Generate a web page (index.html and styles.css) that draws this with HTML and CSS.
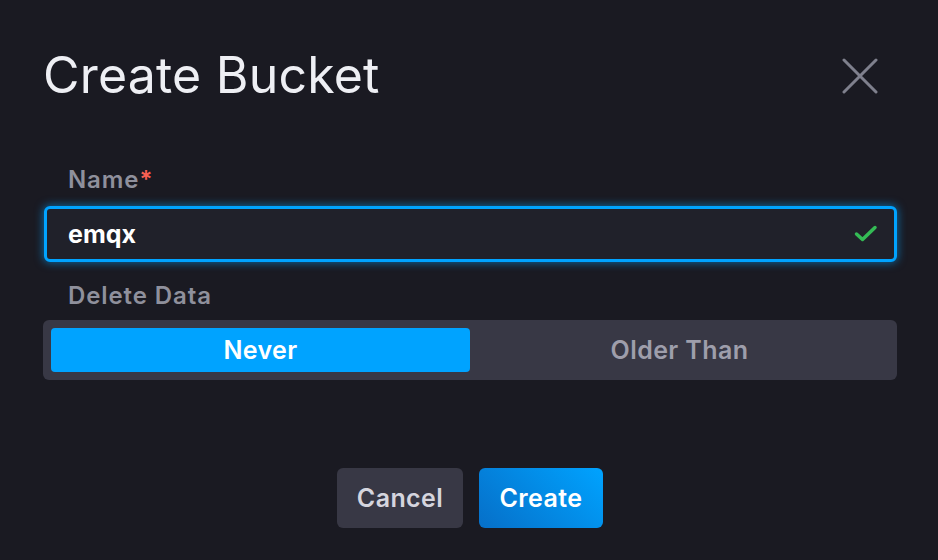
FILE: index.html
```html
<!DOCTYPE html>
<html>
<head>
<meta charset="utf-8">
<link rel="stylesheet" href="styles.css">
</head>
<body>
<div class="dialog">
  <div class="header">
    <h1 class="title">Create Bucket</h1>
    <button class="close" aria-label="Close">
      <svg width="36" height="36" viewBox="0 0 36 36"><path d="M2 2 L34 34 M34 2 L2 34" stroke="#7f808d" stroke-width="3" stroke-linecap="round"/></svg>
    </button>
  </div>
  <div class="body">
    <div class="field">
      <label class="label">Name<span class="req">*</span></label>
      <div class="input">
        <span class="value">emqx</span>
        <svg class="check" width="24" height="20" viewBox="0 0 24 20"><path d="M2.5 10 L8.5 15.5 L21 3.5" fill="none" stroke="#34bb55" stroke-width="3.5" stroke-linecap="round" stroke-linejoin="round"/></svg>
      </div>
    </div>
    <div class="field">
      <label class="label">Delete Data</label>
      <div class="toggle">
        <div class="opt active">Never</div>
        <div class="opt">Older Than</div>
      </div>
    </div>
  </div>
  <div class="footer">
    <button class="btn cancel">Cancel</button>
    <button class="btn create">Create</button>
  </div>
</div>
</body>
</html>
```
FILE: styles.css
```css
* { box-sizing: border-box; }
html, body { margin: 0; padding: 0; }
body {
  background: #1a1a22;
  width: 938px;
  height: 560px;
  font-family: Inter, "Noto Sans", sans-serif;
  color: #e7e8ee;
  overflow: hidden;
}
.dialog {
  padding: 0 41px 0 43px;
}
.header {
  display: flex;
  align-items: center;
  justify-content: space-between;
  height: 152px;
}
.title {
  margin: 0;
  font-weight: 400;
  font-size: 50px;
  color: #eeeff4;
  letter-spacing: 0.2px;
  margin-top: -2px;
}
.close {
  background: none;
  border: 0;
  padding: 0;
  width: 36px;
  height: 36px;
  margin-right: 19px;
  cursor: pointer;
}
.close svg { display: block; }
.body {
  display: flex;
  flex-direction: column;
  margin-top: 13px;
}
.field {
  display: flex;
  flex-direction: column;
}
.field + .field { margin-top: 19px; }
.label {
  font-weight: 600;
  font-size: 24px;
  letter-spacing: 0.9px;
  color: #8f909c;
  padding-left: 25px;
  height: 30px;
  line-height: 30px;
  margin-bottom: 11px;
}
.field + .field .label { margin-bottom: 9px; }
.req { color: #f95f53; }
.input {
  height: 56px;
  border: 3px solid #00a3ff;
  border-radius: 6px;
  background: #20212a;
  box-shadow: 0 0 8px 1px rgba(0, 163, 255, 0.55);
  display: flex;
  align-items: center;
  justify-content: space-between;
  padding: 0 16px 0 21px;
  margin-left: 1px;
}
.value {
  font-weight: 700;
  font-size: 25px;
  color: #ffffff;
}
.check { display: block; }
.toggle {
  background: #383845;
  border-radius: 6px;
  padding: 8px;
  display: flex;
  height: 60px;
}
.opt {
  flex: 1;
  display: flex;
  align-items: center;
  justify-content: center;
  font-weight: 600;
  font-size: 25px;
  letter-spacing: 0.4px;
  color: #9e9eab;
  border-radius: 4px;
}
.opt.active {
  background: #00a3ff;
  color: #ffffff;
}
.footer {
  display: flex;
  justify-content: center;
  gap: 16px;
  margin-top: 88px;
}
.btn {
  font-family: Inter, "Noto Sans", sans-serif;
  height: 60px;
  border: 0;
  border-radius: 6px;
  font-weight: 600;
  font-size: 25px;
  letter-spacing: 0.4px;
  padding: 0;
}
.cancel {
  background: #383845;
  color: #d5d5de;
  width: 126px;
}
.create {
  background: linear-gradient(45deg, #066fc8 0%, #00a3ff 100%);
  color: #ffffff;
  width: 124px;
}
```
